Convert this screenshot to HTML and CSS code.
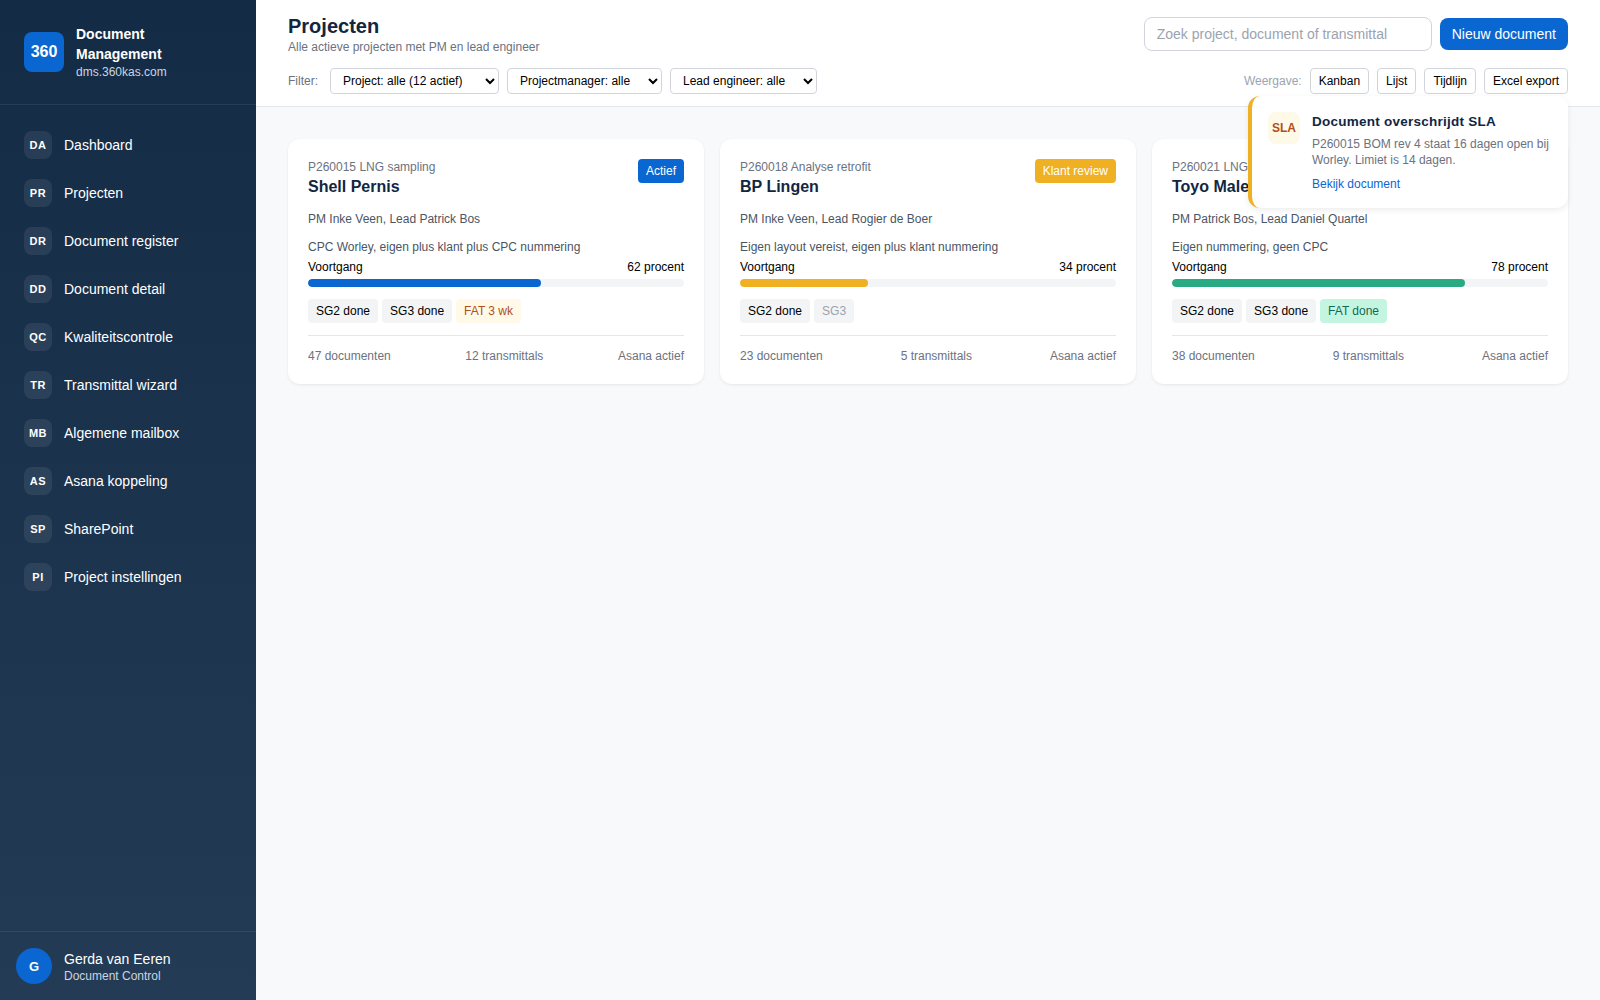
FILE: index.html
```html
<!DOCTYPE html>
<html lang="nl">
<head>
  <meta charset="UTF-8">
  <title>Projecten - Document Management</title>
  <link rel="stylesheet" href="styles.css">
</head>
<body>
  <aside class="sidebar">
    <div class="brand">
      <div class="brand-logo">360</div>
      <div>
        <div class="brand-name">Document Management</div>
        <div class="brand-url">dms.360kas.com</div>
      </div>
    </div>

    <nav class="nav">
      <a class="nav-item"><span class="nav-icon">DA</span>Dashboard</a>
      <a class="nav-item"><span class="nav-icon">PR</span>Projecten</a>
      <a class="nav-item"><span class="nav-icon">DR</span>Document register</a>
      <a class="nav-item"><span class="nav-icon">DD</span>Document detail</a>
      <a class="nav-item"><span class="nav-icon">QC</span>Kwaliteitscontrole</a>
      <a class="nav-item"><span class="nav-icon">TR</span>Transmittal wizard</a>
      <a class="nav-item"><span class="nav-icon">MB</span>Algemene mailbox</a>
      <a class="nav-item"><span class="nav-icon">AS</span>Asana koppeling</a>
      <a class="nav-item"><span class="nav-icon">SP</span>SharePoint</a>
      <a class="nav-item"><span class="nav-icon">PI</span>Project instellingen</a>
    </nav>

    <div class="user">
      <div class="avatar">G</div>
      <div>
        <div class="user-name">Gerda van Eeren</div>
        <div class="user-role">Document Control</div>
      </div>
    </div>
  </aside>

  <main class="main">
    <header class="topbar">
      <div class="topbar-row">
        <div>
          <h1>Projecten</h1>
          <div class="subtitle">Alle actieve projecten met PM en lead engineer</div>
        </div>
        <div class="topbar-actions">
          <input class="search" type="text" placeholder="Zoek project, document of transmittal">
          <button class="btn-primary">Nieuw document</button>
        </div>
      </div>
      <div class="topbar-row filter-row">
        <div class="filters">
          <span class="filter-label">Filter:</span>
          <select class="select select-project"><option>Project: alle (12 actief)</option></select>
          <select class="select select-pm"><option>Projectmanager: alle</option></select>
          <select class="select select-lead"><option>Lead engineer: alle</option></select>
        </div>
        <div class="views">
          <span class="view-label">Weergave:</span>
          <button class="btn-small">Kanban</button>
          <button class="btn-small">Lijst</button>
          <button class="btn-small">Tijdlijn</button>
          <button class="btn-small">Excel export</button>
        </div>
      </div>
    </header>

    <section class="cards">
      <!-- Shell -->
      <article class="card">
        <div class="card-head">
          <div>
            <div class="card-code">P260015 LNG sampling</div>
            <div class="card-title">Shell Pernis</div>
          </div>
          <span class="badge badge-blue">Actief</span>
        </div>
        <div class="card-people">PM Inke Veen, Lead Patrick Bos</div>
        <div class="card-note">CPC Worley, eigen plus klant plus CPC nummering</div>
        <div class="progress-label"><span>Voortgang</span><span>62 procent</span></div>
        <div class="progress"><div class="progress-fill fill-blue" style="width: 62%"></div></div>
        <div class="tags">
          <span class="tag">SG2 done</span>
          <span class="tag">SG3 done</span>
          <span class="tag tag-warn">FAT 3 wk</span>
        </div>
        <div class="card-foot"><span>47 documenten</span><span>12 transmittals</span><span>Asana actief</span></div>
      </article>

      <!-- BP -->
      <article class="card">
        <div class="card-head">
          <div>
            <div class="card-code">P260018 Analyse retrofit</div>
            <div class="card-title">BP Lingen</div>
          </div>
          <span class="badge badge-amber">Klant review</span>
        </div>
        <div class="card-people">PM Inke Veen, Lead Rogier de Boer</div>
        <div class="card-note">Eigen layout vereist, eigen plus klant nummering</div>
        <div class="progress-label"><span>Voortgang</span><span>34 procent</span></div>
        <div class="progress"><div class="progress-fill fill-amber" style="width: 34%"></div></div>
        <div class="tags">
          <span class="tag">SG2 done</span>
          <span class="tag tag-muted">SG3</span>
        </div>
        <div class="card-foot"><span>23 documenten</span><span>5 transmittals</span><span>Asana actief</span></div>
      </article>

      <!-- Toyo -->
      <article class="card">
        <div class="card-head">
          <div>
            <div class="card-code">P260021 LNG terminal</div>
            <div class="card-title">Toyo Malesie</div>
          </div>
        </div>
        <div class="card-people">PM Patrick Bos, Lead Daniel Quartel</div>
        <div class="card-note">Eigen nummering, geen CPC</div>
        <div class="progress-label"><span>Voortgang</span><span>78 procent</span></div>
        <div class="progress"><div class="progress-fill fill-green" style="width: 78%"></div></div>
        <div class="tags">
          <span class="tag">SG2 done</span>
          <span class="tag">SG3 done</span>
          <span class="tag tag-ok">FAT done</span>
        </div>
        <div class="card-foot"><span>38 documenten</span><span>9 transmittals</span><span>Asana actief</span></div>
      </article>
    </section>

    <div class="toast">
      <div class="toast-icon">SLA</div>
      <div>
        <div class="toast-title">Document overschrijdt SLA</div>
        <div class="toast-text">P260015 BOM rev 4 staat 16 dagen open bij Worley. Limiet is 14 dagen.</div>
        <a class="toast-link">Bekijk document</a>
      </div>
    </div>
  </main>
</body>
</html>
```

FILE: styles.css
```css
* {
  margin: 0;
  padding: 0;
  box-sizing: border-box;
}

body {
  font-family: "Liberation Sans", Arial, sans-serif;
  background: #f8f9fb;
  color: #12263f;
  height: 1000px;
  display: flex;
  overflow: hidden;
}

/* ===== Sidebar ===== */
.sidebar {
  width: 256px;
  height: 100%;
  flex-shrink: 0;
  display: flex;
  flex-direction: column;
  background: linear-gradient(180deg, #132b45, #243b55);
  color: white;
}

.brand {
  height: 105px;
  padding: 0 24px;
  display: flex;
  align-items: center;
  gap: 12px;
  border-bottom: 1px solid rgba(255, 255, 255, 0.08);
}

.brand-logo {
  width: 40px;
  height: 40px;
  flex-shrink: 0;
  border-radius: 8px;
  background: #0a66d1;
  display: flex;
  align-items: center;
  justify-content: center;
  font-size: 16px;
  font-weight: bold;
}

.brand-name {
  font-size: 14px;
  font-weight: bold;
  line-height: 20px;
}

.brand-url {
  font-size: 12px;
  line-height: 16px;
  color: #cbd5e1;
}

.nav {
  flex: 1;
  padding-top: 16px;
}

.nav-item {
  height: 48px;
  padding: 0 24px;
  display: flex;
  align-items: center;
  gap: 12px;
  font-size: 14px;
}

.nav-icon {
  width: 28px;
  height: 28px;
  border-radius: 8px;
  background: rgba(255, 255, 255, 0.08);
  display: flex;
  align-items: center;
  justify-content: center;
  font-size: 11px;
  font-weight: bold;
  letter-spacing: 0.5px;
}

.user {
  height: 69px;
  padding: 0 16px;
  display: flex;
  align-items: center;
  gap: 12px;
  border-top: 1px solid rgba(255, 255, 255, 0.08);
}

.avatar {
  width: 36px;
  height: 36px;
  border-radius: 50%;
  background: #0a66d1;
  display: flex;
  align-items: center;
  justify-content: center;
  font-size: 13px;
  font-weight: bold;
}

.user-name {
  font-size: 14px;
  line-height: 20px;
}

.user-role {
  font-size: 12px;
  line-height: 15px;
  color: #cbd5e1;
}

/* ===== Main ===== */
.main {
  flex: 1;
  position: relative;
}

.topbar {
  height: 107px;
  padding: 13px 32px 0;
  background: white;
  border-bottom: 1px solid #e5e7eb;
}

.topbar-row {
  display: flex;
  justify-content: space-between;
  align-items: center;
}

.filter-row {
  margin-top: 13px;
}

h1 {
  font-size: 20px;
  line-height: 26px;
  font-weight: bold;
  color: #12263f;
}

.subtitle {
  font-size: 12px;
  line-height: 16px;
  color: #6b7280;
}

.topbar-actions {
  display: flex;
  align-items: center;
  gap: 8px;
}

.search {
  width: 288px;
  height: 34px;
  padding: 0 12px;
  border: 1px solid #d1d5db;
  border-radius: 8px;
  font-family: inherit;
  font-size: 14px;
}

.search::placeholder {
  color: #9ca3af;
}

.btn-primary {
  height: 32px;
  padding: 0 12px;
  border: none;
  border-radius: 8px;
  background: #0a66d1;
  color: white;
  font-family: inherit;
  font-size: 14px;
}

.filters, .views {
  display: flex;
  align-items: center;
  gap: 8px;
}

.filter-label {
  font-size: 12px;
  color: #6b7280;
  margin-right: 4px;
}

.view-label {
  font-size: 12px;
  color: #9ca3af;
}

.select {
  height: 26px;
  padding: 0 6px 0 8px;
  border: 1px solid #d1d5db;
  border-radius: 4px;
  background: white;
  color: black;
  font-family: inherit;
  font-size: 12px;
}

.select-project { width: 169px; }
.select-pm { width: 155px; }
.select-lead { width: 147px; }

.btn-small {
  height: 26px;
  padding: 0 8px;
  border: 1px solid #d1d5db;
  border-radius: 4px;
  background: white;
  color: black;
  font-family: inherit;
  font-size: 12px;
}

/* ===== Cards ===== */
.cards {
  padding: 32px;
  display: grid;
  grid-template-columns: repeat(3, 1fr);
  gap: 16px;
}

.card {
  padding: 20px;
  background: white;
  border-radius: 12px;
  box-shadow: 0 1px 3px rgba(0, 0, 0, 0.08);
}

.card-head {
  display: flex;
  justify-content: space-between;
  align-items: flex-start;
  min-height: 42px;
}

.card-code {
  font-size: 12px;
  line-height: 16px;
  color: #6b7280;
}

.card-title {
  margin-top: 1px;
  font-size: 16px;
  line-height: 22px;
  font-weight: bold;
  color: #12263f;
}

.badge {
  padding: 0 8px;
  height: 24px;
  line-height: 24px;
  border-radius: 4px;
  font-size: 12px;
  color: white;
}

.badge-blue { background: #0a66d1; }
.badge-amber { background: #f0b023; }

.card-people {
  margin-top: 10px;
  font-size: 12px;
  line-height: 16px;
  color: #4b5563;
}

.card-note {
  margin-top: 12px;
  font-size: 12px;
  line-height: 16px;
  color: #4b5563;
}

.progress-label {
  margin-top: 4px;
  display: flex;
  justify-content: space-between;
  font-size: 12px;
  line-height: 16px;
  color: black;
}

.progress {
  margin-top: 4px;
  height: 8px;
  border-radius: 4px;
  background: #f3f4f6;
  overflow: hidden;
}

.progress-fill {
  height: 100%;
  border-radius: 4px;
}

.fill-blue { background: #0a66d1; }
.fill-amber { background: #f0b023; }
.fill-green { background: #2aaa82; }

.tags {
  margin-top: 12px;
  display: flex;
  gap: 4px;
}

.tag {
  height: 24px;
  line-height: 24px;
  padding: 0 8px;
  border-radius: 4px;
  background: #f3f4f6;
  color: black;
  font-size: 12px;
}

.tag-warn { background: #fff9e8; color: #b0501a; }
.tag-muted { color: #9ca3af; }
.tag-ok { background: #c4f5e0; color: #0f6b55; }

.card-foot {
  margin-top: 12px;
  padding-top: 12px;
  border-top: 1px solid #e5e7eb;
  display: flex;
  justify-content: space-between;
  font-size: 12px;
  line-height: 16px;
  color: #6b7280;
}

/* ===== Toast ===== */
.toast {
  position: absolute;
  top: 96px;
  right: 32px;
  width: 320px;
  height: 112px;
  padding: 16px;
  display: flex;
  gap: 12px;
  background: white;
  border-left: 4px solid #f0b023;
  border-radius: 12px;
  box-shadow: 0 2px 6px rgba(0, 0, 0, 0.08);
}

.toast-icon {
  width: 32px;
  height: 32px;
  flex-shrink: 0;
  border-radius: 8px;
  background: #fff9e8;
  color: #b0501a;
  display: flex;
  align-items: center;
  justify-content: center;
  font-size: 12px;
  font-weight: bold;
}

.toast-title {
  margin-top: 1px;
  font-size: 13.5px;
  line-height: 18px;
  font-weight: bold;
  letter-spacing: 0.25px;
  color: #12263f;
}

.toast-text {
  margin-top: 5px;
  font-size: 12px;
  line-height: 16px;
  color: #6b7280;
}

.toast-link {
  display: block;
  margin-top: 8px;
  font-size: 12px;
  line-height: 16px;
  color: #0a66d1;
}
```
